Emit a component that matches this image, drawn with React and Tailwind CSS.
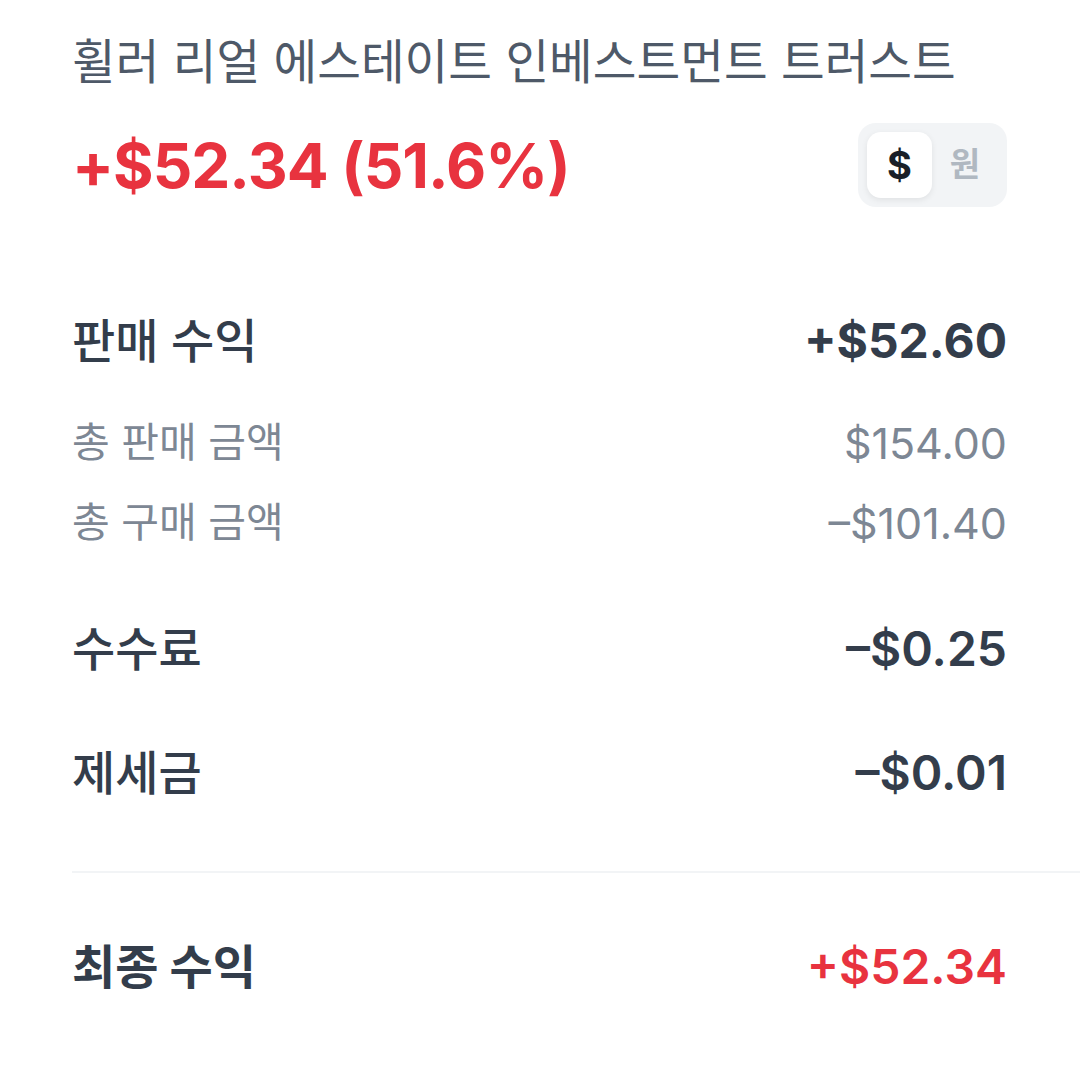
import React from "react";

const F = { fontFamily: "Inter, 'Noto Sans CJK KR', sans-serif" };

function Row({ label, value, labelCls, valueCls, h = "h-[80px]", mt }) {
  return (
    <div className={`flex items-center justify-between ${h} ${mt}`}>
      <span className={labelCls}>{label}</span>
      <span className={valueCls}>{value}</span>
    </div>
  );
}

export default function App() {
  return (
    <div className="w-[1080px] h-[1068px] bg-white pl-[72px] overflow-hidden" style={F}>
      <div className="pr-[73px]">
        <div className="h-[84px] mt-[20px] flex items-center">
          <span className="text-[47.5px] font-normal text-[#4e5968] whitespace-nowrap">
            휠러 리얼 에스테이트 인베스트먼트 트러스트
          </span>
        </div>
        <div className="h-[122px] flex items-center justify-between">
          <span className="text-[62px] font-bold text-[#e8333f] tracking-[-1px]">
            +$52.34 (51.6%)
          </span>
          <div className="flex items-center bg-[#f2f4f6] rounded-[18px] p-[9px] w-[149px] h-[84px]">
            <div className="w-[65px] h-[66px] bg-white rounded-[14px] shadow-[0_2px_6px_rgba(0,0,0,0.08)] flex items-center justify-center text-[38px] font-bold text-[#191f28]">
              $
            </div>
            <div className="flex-1 flex items-center justify-center text-[33px] font-bold text-[#b0b8c1]">
              원
            </div>
          </div>
        </div>
        <Row
          mt="mt-[75px]"
          label="판매 수익"
          value="+$52.60"
          labelCls="text-[47px] font-medium text-[#333d4b]"
          valueCls="text-[48px] font-bold text-[#333d4b]"
        />
        <Row
          mt="mt-[22px]"
          label="총 판매 금액"
          value="$154.00"
          labelCls="text-[41px] text-[#7d8794]"
          valueCls="text-[43px] text-[#7d8794]"
        />
        <Row
          label="총 구매 금액"
          value="–$101.40"
          labelCls="text-[41px] text-[#7d8794]"
          valueCls="text-[43px] text-[#7d8794]"
        />
        <Row
          mt="mt-[46px]"
          label="수수료"
          value="–$0.25"
          labelCls="text-[47px] font-medium text-[#333d4b]"
          valueCls="text-[48px] font-semibold text-[#333d4b]"
        />
        <Row
          mt="mt-[44px]"
          label="제세금"
          value="–$0.01"
          labelCls="text-[47px] font-medium text-[#333d4b]"
          valueCls="text-[48px] font-semibold text-[#333d4b]"
        />
      </div>
      <div className="mt-[58px] h-[2px] bg-[#f2f4f6]" />
      <div className="pr-[73px]">
        <Row
          mt="mt-[54px]"
          label="최종 수익"
          value="+$52.34"
          labelCls="text-[47px] font-bold text-[#333d4b]"
          valueCls="text-[48px] font-semibold text-[#e8333f]"
        />
      </div>
    </div>
  );
}
